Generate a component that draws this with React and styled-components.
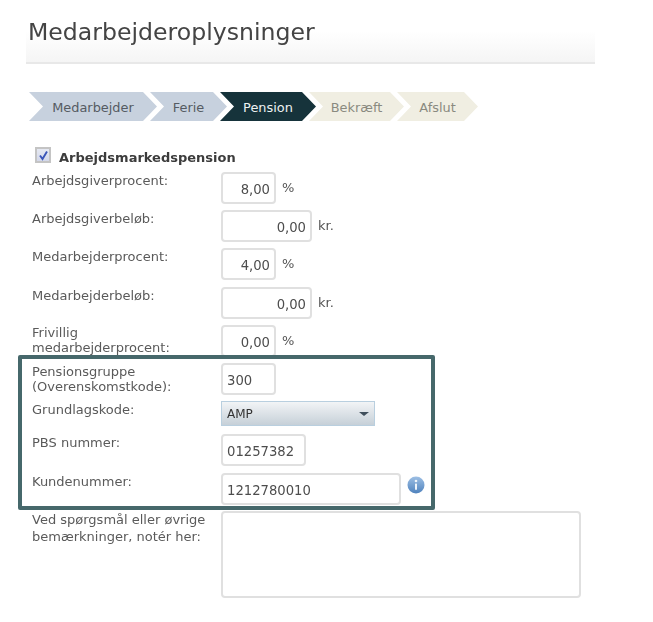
import React from 'react';
import styled, { createGlobalStyle } from 'styled-components';

const Global = createGlobalStyle`
  html, body { margin: 0; padding: 0; background: #fff; }
  body { font-family: "DejaVu Sans", Verdana, sans-serif; color: #555; }
`;

const Page = styled.div`
  width: 653px;
  height: 622px;
  padding: 20px 0 0 26px;
  box-sizing: border-box;
  overflow: hidden;
  filter: blur(0.45px);
`;

const Header = styled.header`
  width: 569px;
  height: 44px;
  box-sizing: border-box;
  padding-left: 2px;
  border-bottom: 2px solid #e8e8e8;
  background: linear-gradient(#fff 25%, #f5f5f5);
`;

const Title = styled.h1`
  margin: 0;
  font-size: 23.6px;
  line-height: 24px;
  font-weight: 400;
  color: #444;
`;

const Steps = styled.nav`
  display: flex;
  margin: 28px 0 0 3px;
`;

const Step = styled.div`
  width: ${p => p.$w}px;
  height: 29px;
  margin-right: -7px;
  padding-top: 1px;
  box-sizing: border-box;
  display: flex;
  align-items: center;
  justify-content: center;
  font-size: 12.9px;
  background: ${p => p.$bg};
  color: ${p => p.$fg};
  clip-path: polygon(0 0, calc(100% - 14px) 0, 100% 50%, calc(100% - 14px) 100%, 0 100%, 14px 50%);
`;

const Form = styled.div`
  margin: 26px 0 0 6px;
  display: flex;
  flex-direction: column;
`;

const Heading = styled.label`
  display: flex;
  align-items: flex-start;
  gap: 8px;
  margin-left: 3px;
  height: 16px;
  font-size: 13px;
  line-height: 16px;
  font-weight: 700;
  color: #3c3c3c;
`;

const HeadingText = styled.span`
  margin-top: 3px;
`;

const Check = styled.span`
  width: 12px;
  height: 12px;
  border: 2px solid #c4c4c4;
  background: linear-gradient(#e6e9f3, #d3d8ea);
  display: flex;
  align-items: center;
  justify-content: center;
`;

const Spacer = styled.div`
  height: 9px;
`;

const Row = styled.div`
  display: flex;
  align-items: flex-start;
  height: ${p => p.$h}px;
`;

const Label = styled.div`
  width: 189px;
  flex: none;
  font-size: 13px;
  line-height: ${p => p.$lh ?? 15}px;
  padding-top: ${p => p.$top ?? 1}px;
  color: #5a5a5a;
  box-sizing: border-box;
  white-space: nowrap;
`;

const Field = styled.div`
  width: ${p => p.$w}px;
  height: 32px;
  box-sizing: border-box;
  border: 2px solid #e0e0e0;
  border-radius: 4px;
  background: #fff;
  font-size: 13.2px;
  line-height: 28px;
  padding: 2px 4px 0;
  text-align: ${p => (p.$left ? 'left' : 'right')};
  color: #4d4d4d;
  flex: none;
`;

const Unit = styled.span`
  margin: 7px 0 0 6px;
  font-size: 13px;
  line-height: 18px;
  color: #555;
`;

const Highlight = styled.section`
  width: 417px;
  height: 155px;
  box-sizing: border-box;
  margin: -1px 0 0 -14px;
  padding: 4px 0 0 10px;
  border: 4px solid #46686b;
  border-radius: 2px;
`;

const Select = styled.div`
  width: 154px;
  height: 25px;
  box-sizing: border-box;
  border: 1px solid #b9cfdf;
  background: linear-gradient(#f2f4f6, #c6d0d8);
  display: flex;
  align-items: center;
  justify-content: space-between;
  padding: 1px 5px 0 5px;
  font-size: 12px;
  color: #333;
`;

const Caret = styled.span`
  width: 0;
  height: 0;
  border-left: 5px solid transparent;
  border-right: 5px solid transparent;
  border-top: 4px solid #3f4f5c;
`;

const Info = styled.svg`
  width: 18px;
  height: 18px;
  margin: 3px 0 0 6px;
  flex: none;
`;

const TextBox = styled.div`
  width: 360px;
  height: 87px;
  box-sizing: border-box;
  border: 2px solid #e0e0e0;
  border-radius: 4px;
  background: #fff;
  flex: none;
`;

const Comment = styled(Row)`
  margin-top: 1px;
`;

const steps = [
  ['Medarbejder', 128, '#c7d1de', '#555b62'],
  ['Ferie', 77, '#c7d1de', '#555b62'],
  ['Pension', 96, '#16333b', '#eef2f2'],
  ['Bekræft', 95, '#f0eee2', '#8a8a80'],
  ['Afslut', 81, '#f0eee2', '#8a8a80'],
];

const rows = [
  ['Arbejdsgiverprocent:', '8,00', 55, '%', 38],
  ['Arbejdsgiverbeløb:', '0,00', 91, 'kr.', 38],
  ['Medarbejderprocent:', '4,00', 55, '%', 39],
  ['Medarbejderbeløb:', '0,00', 91, 'kr.', 38],
];

export default function App() {
  return (
    <Page>
      <Global />
      <Header>
        <Title>Medarbejderoplysninger</Title>
      </Header>
      <Steps>
        {steps.map(([t, w, bg, fg]) => (
          <Step key={t} $w={w} $bg={bg} $fg={fg}>{t}</Step>
        ))}
      </Steps>
      <Form>
        <Heading>
          <Check>
            <svg width="11" height="11" viewBox="0 0 11 11">
              <path d="M2 5.5 L4.5 9 L9 1.5" fill="none" stroke="#3a55b8" strokeWidth="1.9" />
            </svg>
          </Check>
          <HeadingText>Arbejdsmarkedspension</HeadingText>
        </Heading>
        <Spacer />
        {rows.map(([l, v, w, u, h]) => (
          <Row key={l} $h={h}>
            <Label>{l}</Label>
            <Field $w={w}>{v}</Field>
            <Unit>{u}</Unit>
          </Row>
        ))}
        <Row $h={31}>
          <Label $top={0}>Frivillig<br />medarbejderprocent:</Label>
          <Field $w={55}>0,00</Field>
          <Unit>%</Unit>
        </Row>
        <Highlight>
          <Row $h={38}>
            <Label $top={1}>Pensionsgruppe<br />(Overenskomstkode):</Label>
            <Field $w={55} $left>300</Field>
          </Row>
          <Row $h={33}>
            <Label $top={1}>Grundlagskode:</Label>
            <Select>AMP<Caret /></Select>
          </Row>
          <Row $h={39}>
            <Label $top={1}>PBS nummer:</Label>
            <Field $w={85} $left>01257382</Field>
          </Row>
          <Row $h={32}>
            <Label $top={1}>Kundenummer:</Label>
            <Field $w={180} $left>1212780010</Field>
            <Info viewBox="0 0 18 18">
              <defs>
                <linearGradient id="infoFill" x1="0" y1="0" x2="0" y2="1">
                  <stop offset="0" stopColor="#9dbfe4" />
                  <stop offset="1" stopColor="#4f82bd" />
                </linearGradient>
              </defs>
              <circle cx="9" cy="9" r="8.5" fill="url(#infoFill)" />
              <circle cx="9" cy="5" r="1.3" fill="#eef4fb" />
              <rect x="8" y="7.4" width="2" height="6.4" rx="0.6" fill="#eef4fb" />
            </Info>
          </Row>
        </Highlight>
        <Comment $h={87}>
          <Label $top={0} $lh={17}>Ved spørgsmål eller øvrige<br />bemærkninger, notér her:</Label>
          <TextBox />
        </Comment>
      </Form>
    </Page>
  );
}
